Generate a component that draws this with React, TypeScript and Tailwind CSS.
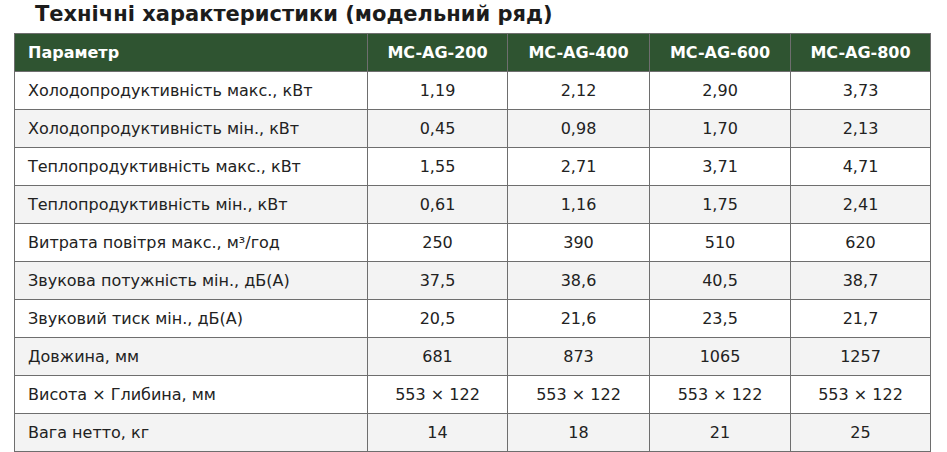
import React from "react";

const rows: string[][] = [
  ["Холодопродуктивність макс., кВт", "1,19", "2,12", "2,90", "3,73"],
  ["Холодопродуктивність мін., кВт", "0,45", "0,98", "1,70", "2,13"],
  ["Теплопродуктивність макс., кВт", "1,55", "2,71", "3,71", "4,71"],
  ["Теплопродуктивність мін., кВт", "0,61", "1,16", "1,75", "2,41"],
  ["Витрата повітря макс., м³/год", "250", "390", "510", "620"],
  ["Звукова потужність мін., дБ(А)", "37,5", "38,6", "40,5", "38,7"],
  ["Звуковий тиск мін., дБ(А)", "20,5", "21,6", "23,5", "21,7"],
  ["Довжина, мм", "681", "873", "1065", "1257"],
  ["Висота × Глибина, мм", "553 × 122", "553 × 122", "553 × 122", "553 × 122"],
  ["Вага нетто, кг", "14", "18", "21", "25"],
];

const models = ["MC-AG-200", "MC-AG-400", "MC-AG-600", "MC-AG-800"];

export default function App() {
  return (
    <div className="bg-white w-[947px] h-[452px] overflow-hidden font-['DejaVu_Sans',Verdana,sans-serif]">
      <h2 className="h-[33px] pl-[35px] pt-[1px] text-[21px] font-bold leading-[27px] text-[#1c1c1c]">
        Технічні характеристики (модельний ряд)
      </h2>
      <table className="ml-[14px] w-[916px] table-fixed border-collapse text-[16px] text-[#222]">
        <colgroup>
          <col className="w-[353px]" />
          <col className="w-[140px]" />
          <col className="w-[142px]" />
          <col className="w-[141px]" />
          <col className="w-[140px]" />
        </colgroup>
        <thead>
          <tr className="h-[38px] bg-[#2f5431] text-white">
            <th className="border border-[#6e6e6e] p-0 pl-[13px] text-left font-bold">Параметр</th>
            {models.map((m) => (
              <th key={m} className="border border-[#6e6e6e] p-0 text-center font-bold">
                {m}
              </th>
            ))}
          </tr>
        </thead>
        <tbody>
          {rows.map((r, i) => (
            <tr key={i} className={i % 2 === 0 ? "h-[38px] bg-white" : "h-[38px] bg-[#f3f3f3]"}>
              {r.map((c, j) => (
                <td
                  key={j}
                  className={
                    j === 0
                      ? "border border-[#6e6e6e] p-0 pl-[13px] text-left whitespace-nowrap"
                      : "border border-[#6e6e6e] p-0 text-center whitespace-nowrap"
                  }
                >
                  {c}
                </td>
              ))}
            </tr>
          ))}
        </tbody>
      </table>
    </div>
  );
}
